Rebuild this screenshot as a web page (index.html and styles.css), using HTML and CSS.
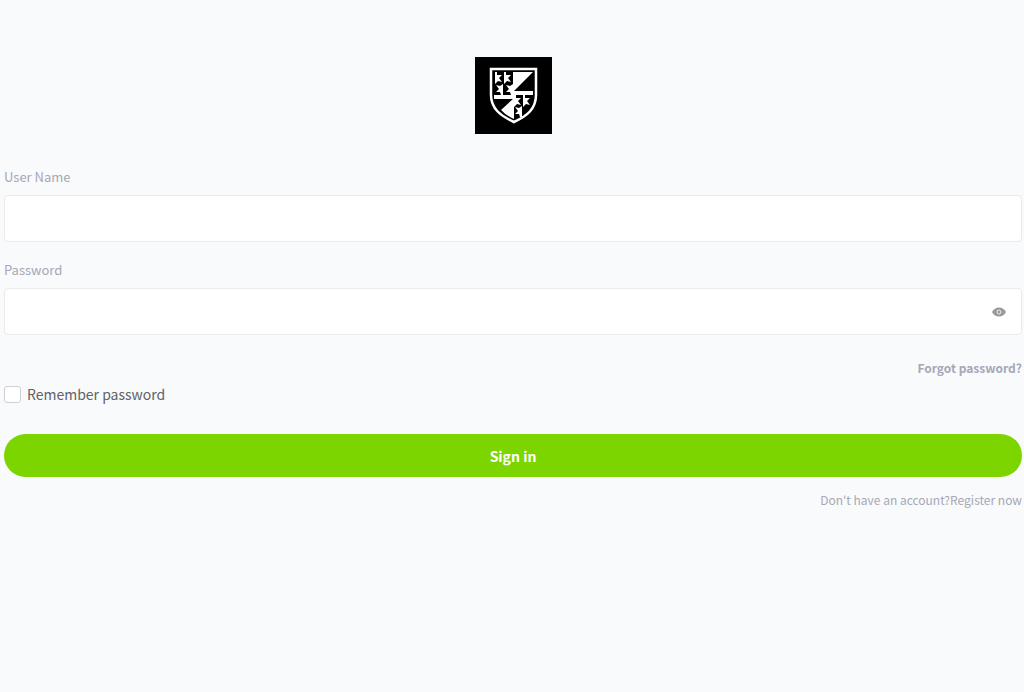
FILE: index.html
```html
<!DOCTYPE html>
<html lang="en">
<head>
    <meta charset="UTF-8">
    <meta name="viewport" content="width=device-width, initial-scale=1.0">
    <title>Sign in</title>
    <link rel="stylesheet" href="styles.css">
</head>
<body>
    <main class="login">
        <svg class="logo" viewBox="0 0 77 77" role="img" aria-label="Logo">
            <defs>
                <path id="flag" d="M1 0h2v3h5L5 6l3 4-4-1-3 3z"/>
                <path id="flag-back" d="M9 0v11H7L6 8H2l3-3-3-4 4 1z"/>
            </defs>
            <rect width="77" height="77"/>
            <path d="M16 12h45v26c0 14-9 21-22 27-13-6-23-13-23-27z" fill="none" stroke="#fff" stroke-width="2.5"/>
            <g fill="#fff">
                <path d="M38 15h20L38 35zM38 34h20v4H38zM19 38h20v4H19zM39 41v21c-5-2-9-5-13-9z"/>
                <use href="#flag" x="19" y="15"/>
                <use href="#flag" x="28" y="15"/>
                <use href="#flag-back" x="19" y="27"/>
                <use href="#flag-back" x="29" y="27"/>
                <use href="#flag" x="38" y="38"/>
                <use href="#flag" x="47" y="38"/>
                <use href="#flag-back" x="38" y="49"/>
            </g>
        </svg>

        <form class="login-form">
            <label class="field-label" for="username">User Name</label>
            <input class="field" type="text" id="username">

            <label class="field-label" for="password">Password</label>
            <div class="password-box">
                <input class="field" type="password" id="password">
                <button class="eye-button" type="button" aria-label="Show password">
                    <svg viewBox="0 0 14 10" width="14" height="10">
                        <path d="M0 5C3-1 11-1 14 5 11 11 3 11 0 5z" fill="#999"/>
                        <circle cx="7" cy="5" r="2" fill="#999" stroke="#eee"/>
                    </svg>
                </button>
            </div>

            <a class="forgot" href="#">Forgot password?</a>

            <div class="remember">
                <input type="checkbox" id="remember">
                <label for="remember">Remember password</label>
            </div>

            <button class="sign-in" type="submit">Sign in</button>

            <p class="register">Don't have an account?<a href="#">Register now</a></p>
        </form>
    </main>
</body>
</html>
```
FILE: styles.css
```css
* {
    box-sizing: border-box;
}

body {
    margin: 0;
    background-color: #f9fafc;
    color: #606266;
    font-family: "Noto Sans CJK SC", sans-serif;
}

.login {
    padding: 57px 2px 0 4px;
}

.logo {
    display: block;
    width: 77px;
    height: 77px;
    margin: 0 auto 32px;
}

.login-form {
    display: flex;
    flex-direction: column;
}

.field-label {
    margin-bottom: 7px;
    color: #a5a8b6;
    font-size: 13px;
    line-height: 22px;
}

.field {
    width: 100%;
    height: 47px;
    margin-bottom: 17px;
    padding: 0 16px;
    border: 1px solid #e9ebed;
    border-radius: 4px;
    background: #fff;
    font-family: inherit;
    font-size: 14px;
}

.password-box {
    position: relative;
}

.password-box .field {
    padding-right: 44px;
}

.eye-button {
    position: absolute;
    top: 14px;
    right: 13px;
    display: flex;
    align-items: center;
    justify-content: center;
    width: 20px;
    height: 20px;
    padding: 0;
    border: none;
    background: none;
    cursor: pointer;
}

a {
    color: inherit;
    text-decoration: none;
}

.forgot {
    align-self: flex-end;
    margin-top: 5px;
    color: #a5a8b6;
    font-size: 12px;
    font-weight: bold;
    line-height: 22px;
}

.remember {
    display: flex;
    align-items: center;
    gap: 6px;
    margin: 3px 0 28px;
    font-size: 14px;
    line-height: 24px;
}

.remember input {
    appearance: none;
    width: 17px;
    height: 17px;
    margin: 0;
    border: 1px solid #cdcfd4;
    border-radius: 3px;
    background: #fff;
}

.remember input:checked {
    background: #7dd500;
}

.sign-in {
    height: 43px;
    padding: 0;
    border: none;
    border-radius: 22px;
    background: #7dd500;
    color: #fff;
    font-family: inherit;
    font-size: 14px;
    font-weight: bold;
    cursor: pointer;
}

.register {
    margin: 12px 0 0;
    color: #a5a8b6;
    font-size: 12px;
    line-height: 22px;
    text-align: right;
}
```
